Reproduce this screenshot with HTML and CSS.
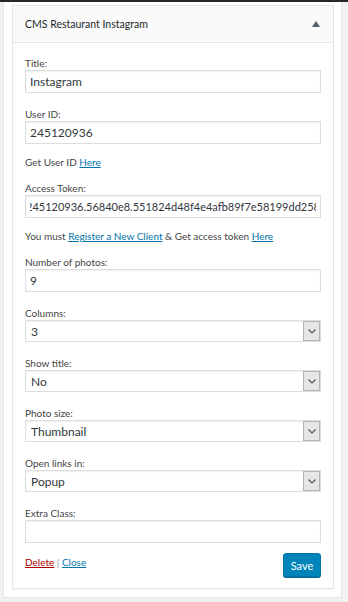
FILE: index.html
```html
<!DOCTYPE html>
<html lang="en">
<head>
  <meta charset="utf-8">
  <meta name="viewport" content="width=device-width, initial-scale=1.0">
  <title>Widgets</title>
  <link rel="stylesheet" href="styles.css">
</head>
<body>
  <div class="sidebar">
    <div class="widget">
      <div class="widget-top">
        <h3>CMS Restaurant Instagram</h3>
        <svg class="toggle" viewBox="0 0 8 6" width="8" height="6"><polygon points="4,0 8,6 0,6" fill="#555d66"/></svg>
      </div>

      <div class="widget-inside">
        <div class="field">
          <label for="title">Title:</label>
          <input type="text" id="title" value="Instagram">
        </div>

        <div class="field">
          <label for="user-id">User ID:</label>
          <input type="text" id="user-id" value="245120936">
        </div>
        <p class="help">Get User ID <a href="#">Here</a></p>

        <div class="field">
          <label for="token">Access Token:</label>
          <input type="text" id="token" value="245120936.56840e8.551824d48f4e4afb89f7e58199dd258c2a40">
        </div>
        <p class="help">You must <a href="#">Register a New Client</a> &amp; Get access token <a href="#">Here</a></p>

        <div class="field">
          <label for="count">Number of photos:</label>
          <input type="text" id="count" value="9">
        </div>

        <div class="field">
          <label for="columns">Columns:</label>
          <div class="select">
            <select id="columns"><option>3</option></select>
            <span class="arrow"><svg viewBox="0 0 8 5" width="8" height="5"><polyline points="0.5,0.5 4,4 7.5,0.5" fill="none" stroke="#555" stroke-width="1.2"/></svg></span>
          </div>
        </div>

        <div class="field">
          <label for="show-title">Show title:</label>
          <div class="select">
            <select id="show-title"><option>No</option></select>
            <span class="arrow"><svg viewBox="0 0 8 5" width="8" height="5"><polyline points="0.5,0.5 4,4 7.5,0.5" fill="none" stroke="#555" stroke-width="1.2"/></svg></span>
          </div>
        </div>

        <div class="field">
          <label for="size">Photo size:</label>
          <div class="select">
            <select id="size"><option>Thumbnail</option></select>
            <span class="arrow"><svg viewBox="0 0 8 5" width="8" height="5"><polyline points="0.5,0.5 4,4 7.5,0.5" fill="none" stroke="#555" stroke-width="1.2"/></svg></span>
          </div>
        </div>

        <div class="field">
          <label for="links">Open links in:</label>
          <div class="select">
            <select id="links"><option>Popup</option></select>
            <span class="arrow"><svg viewBox="0 0 8 5" width="8" height="5"><polyline points="0.5,0.5 4,4 7.5,0.5" fill="none" stroke="#555" stroke-width="1.2"/></svg></span>
          </div>
        </div>

        <div class="field">
          <label for="extra">Extra Class:</label>
          <input type="text" id="extra" value="">
        </div>

        <div class="widget-control">
          <div class="actions">
            <a href="#" class="delete">Delete</a> <span class="sep">|</span> <a href="#">Close</a>
          </div>
          <button class="save">Save</button>
        </div>
      </div>
    </div>
  </div>

  <script>
    // le jeton est plus long que le champ : on décale un peu
    document.getElementById('token').scrollLeft = 4;
  </script>
</body>
</html>
```

FILE: styles.css
```css
* {
  box-sizing: border-box;
  margin: 0;
  padding: 0;
}
body {
  font-family: 'Lato', 'Liberation Sans', sans-serif;
  font-size: 10px;
  color: #444;
  background: #f1f1f1;
  border-top: 2px solid #23282d;
  height: 602px;
  overflow: hidden;
}
.sidebar {
  margin: 0 6px 0 3px;
  background: #fff;
  border: 1px solid #e5e5e5;
  border-top: none;
  padding: 3px 7px 8px 8px;
}
.widget {
  border: 1px solid #e5e5e5;
  box-shadow: 0 1px 1px rgba(0,0,0,0.04);
  background: #fff;
}
.widget-top {
  height: 37px;
  background: #fafafa;
  border-bottom: 1px solid #e5e5e5;
  display: flex;
  align-items: center;
  justify-content: space-between;
  padding: 0 13px 0 12px;
}
h3 {
  font-size: 10.5px;
  font-weight: 400;
  color: #23282d;
}
.toggle {
  display: block;
}
.widget-inside {
  padding: 14px 12px 11px;
}
.field {
  margin-bottom: 15px;
}
label {
  display: block;
  line-height: 13px;
  color: #444;
}
input, select {
  display: block;
  width: 100%;
  height: 23px;
  border: 1px solid #ddd;
  box-shadow: inset 0 1px 2px rgba(0,0,0,0.07);
  font-family: inherit;
  font-size: 12px;
  color: #32373c;
  padding: 0 4px;
  background: #fff;
  outline: none;
}
#token {
  font-size: 11px;
}
.select {
  position: relative;
}
select {
  appearance: none;
  -webkit-appearance: none;
  height: 22px;
  padding: 0 5px;
}
.arrow {
  position: absolute;
  top: 1px;
  right: 1px;
  width: 17px;
  height: 20px;
  background: #e6e6e6;
  border: 1px solid #b4b4b4;
  display: flex;
  align-items: center;
  justify-content: center;
  pointer-events: none;
}
.arrow svg {
  display: block;
}
.help {
  line-height: 14px;
  margin: -4px 0 13px;
}
a {
  color: #0073aa;
}
a.delete {
  color: #a00;
}
.sep {
  color: #999;
}
.widget-control {
  display: flex;
  justify-content: space-between;
  align-items: flex-start;
  margin-top: -5px;
}
.actions {
  line-height: 14px;
  padding-top: 2px;
}
.save {
  width: 38px;
  height: 24px;
  background: #0085ba;
  border: 1px solid #0073aa;
  border-radius: 3px;
  box-shadow: 0 1px 0 #006799;
  color: #fff;
  font-family: inherit;
  font-size: 11px;
  cursor: pointer;
}
```
